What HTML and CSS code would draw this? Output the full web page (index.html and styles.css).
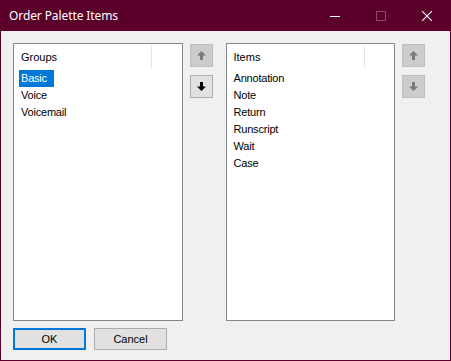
FILE: index.html
```html
<!DOCTYPE html>
<html lang="en">
<head>
  <meta charset="UTF-8" />
  <title>Order Palette Items</title>
  <link rel="stylesheet" href="styles.css">
</head>
<body>
  <div class="window">
    <div class="titlebar">
      <span class="title">Order Palette Items</span>
      <div class="caption-buttons">
        <span class="cap minimize"><svg width="10" height="10" viewBox="0 0 10 10"><path d="M0 5.5h10" stroke="#fff" stroke-width="1"/></svg></span>
        <span class="cap maximize"><svg width="10" height="10" viewBox="0 0 10 10"><rect x="0.5" y="0.5" width="9" height="9" fill="none" stroke="#8c4a68" stroke-width="1"/></svg></span>
        <span class="cap close"><svg width="10" height="10" viewBox="0 0 10 10"><path d="M0 0L10 10M10 0L0 10" stroke="#fff" stroke-width="1.1"/></svg></span>
      </div>
    </div>

    <div class="content">
      <div class="panes">
        <div class="listbox">
          <div class="list-header"><span class="col">Groups</span></div>
          <ul class="rows">
            <li><span class="selected">Basic</span></li>
            <li>Voice</li>
            <li>Voicemail</li>
          </ul>
        </div>
        <div class="movers">
          <button class="mover" disabled><svg width="9" height="9" viewBox="0 0 9 9"><path d="M4.5 0L9 4.5H6V9H3V4.5H0Z" fill="#7a7a7a"/></svg></button>
          <button class="mover"><svg width="9" height="9" viewBox="0 0 9 9"><path d="M4.5 9L9 4.5H6V0H3V4.5H0Z" fill="#000"/></svg></button>
        </div>

        <div class="listbox">
          <div class="list-header"><span class="col">Items</span></div>
          <ul class="rows">
            <li>Annotation</li>
            <li>Note</li>
            <li>Return</li>
            <li>Runscript</li>
            <li>Wait</li>
            <li>Case</li>
          </ul>
        </div>
        <div class="movers">
          <button class="mover" disabled><svg width="9" height="9" viewBox="0 0 9 9"><path d="M4.5 0L9 4.5H6V9H3V4.5H0Z" fill="#7a7a7a"/></svg></button>
          <button class="mover" disabled><svg width="9" height="9" viewBox="0 0 9 9"><path d="M4.5 9L9 4.5H6V0H3V4.5H0Z" fill="#7a7a7a"/></svg></button>
        </div>
      </div>

      <div class="actions">
        <button class="btn default">OK</button>
        <button class="btn">Cancel</button>
      </div>
    </div>
  </div>
</body>
</html>
```

FILE: styles.css
```css
* {
  box-sizing: border-box;
}

body {
  margin: 0;
  font-family: 'Liberation Sans', Arial, sans-serif;
  font-size: 11px;
  color: #000;
  background: #f0f0f0;
}

.window {
  width: 451px;
  height: 361px;
  border: 1px solid #5c002b;
  background: #f0f0f0;
  display: flex;
  flex-direction: column;
}

.titlebar {
  height: 30px;
  background: #5a002a;
  color: #fff;
  display: flex;
  align-items: center;
  justify-content: space-between;
  padding-left: 8px;
}

.title {
  font-family: 'Noto Sans', sans-serif;
  font-size: 12px;
  letter-spacing: -0.1px;
  margin-top: -1px;
}

.caption-buttons {
  display: flex;
  height: 100%;
}

.cap {
  width: 46px;
  height: 100%;
  display: flex;
  align-items: center;
  justify-content: center;
}

.content {
  flex: 1;
  padding: 12px 12px 0 12px;
  display: flex;
  flex-direction: column;
}

.panes {
  display: flex;
  align-items: flex-start;
}

.listbox {
  width: 171px;
  height: 278px;
  background: #fff;
  border: 1px solid #828790;
}

.list-header {
  height: 25px;
  display: flex;
  align-items: center;
  padding-left: 7px;
}

.col {
  width: 131px;
  height: 23px;
  line-height: 23px;
  padding-top: 1px;
  border-right: 1px solid #e5e5e5;
}

.rows {
  list-style: none;
  margin: 1px 0 0 0;
  padding: 0 0 0 6px;
}

.rows li {
  height: 17px;
  line-height: 17px;
  padding-left: 1px;
  letter-spacing: -0.2px;
}

.selected {
  display: inline-block;
  background: #0078d7;
  color: #fff;
  margin-left: -2px;
  padding: 0 7px 0 2px;
}

.movers {
  display: flex;
  flex-direction: column;
  gap: 8px;
  margin: 1px 13px 0 7px;
}

.mover {
  width: 23px;
  height: 23px;
  padding: 0;
  border: 1px solid #adadad;
  background: #e1e1e1;
  display: flex;
  align-items: center;
  justify-content: center;
}

.mover:disabled {
  background: #cccccc;
  border-color: #bfbfbf;
}

.actions {
  display: flex;
  gap: 8px;
  margin-top: 7px;
}

.btn {
  width: 73px;
  height: 22px;
  padding: 0;
  font-family: 'Liberation Sans', Arial, sans-serif;
  font-size: 11px;
  color: #000;
  background: #e1e1e1;
  border: 1px solid #adadad;
}

.btn.default {
  border: 2px solid #0078d7;
}
```
